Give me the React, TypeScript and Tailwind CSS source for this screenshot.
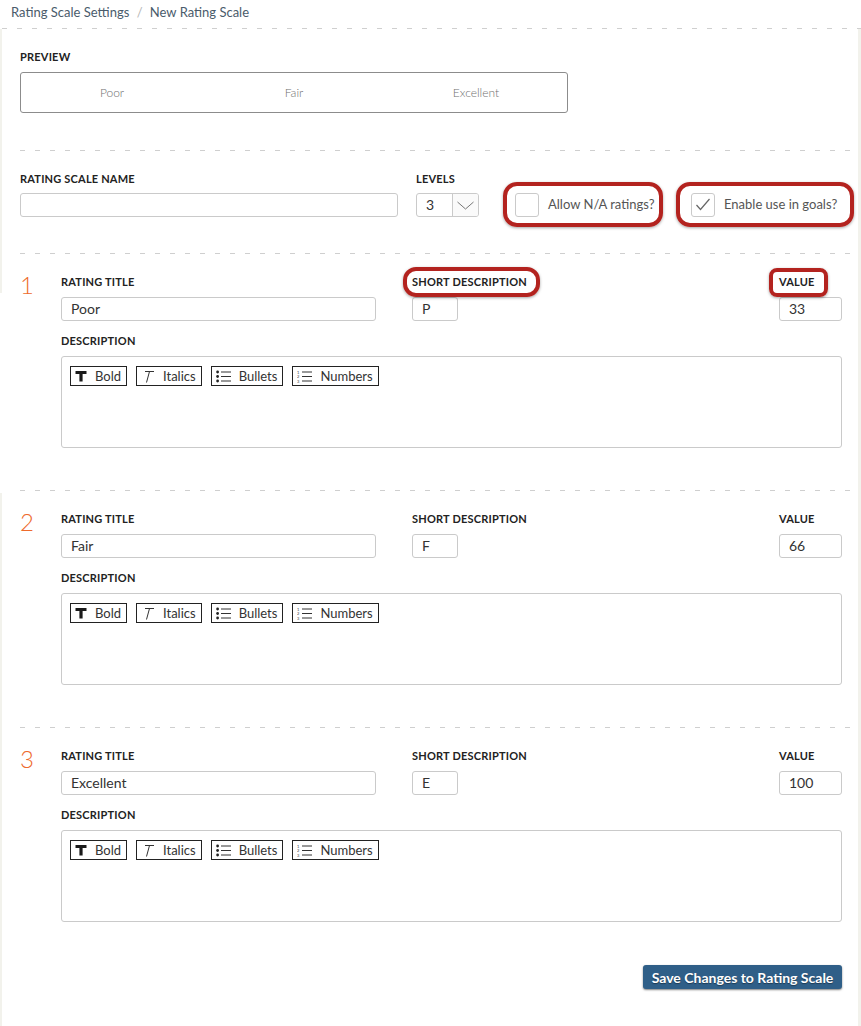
const levels = [
  { n: "1", title: "Poor", short: "P", value: "33", marked: true },
  { n: "2", title: "Fair", short: "F", value: "66", marked: false },
  { n: "3", title: "Excellent", short: "E", value: "100", marked: false },
];

function Dash({ className = "" }: { className?: string }) {
  return (
    <div
      className={`h-px bg-[linear-gradient(to_right,#cfcfcf_5px,transparent_5px)] bg-[length:15px_1px] ${className}`}
    />
  );
}

function Label({ children, mark }: { children: React.ReactNode; mark?: string }) {
  return (
    <div className="relative text-[11px] font-bold leading-[14px] tracking-[0.2px] text-[#222] whitespace-nowrap">
      {children}
      {mark === "short" && (
        <span className="absolute -left-[9px] -right-[13px] -top-[8px] -bottom-[8px] rounded-[13px] border-4 border-[#b3231f] shadow-[0_1px_3px_rgba(0,0,0,0.35)]" />
      )}
      {mark === "value" && (
        <span className="absolute -left-[10px] right-[14px] -top-[7px] -bottom-[8px] rounded-[8px] border-4 border-[#b3231f] shadow-[0_1px_3px_rgba(0,0,0,0.35)]" />
      )}
    </div>
  );
}

function Field({ value = "", className = "" }: { value?: string; className?: string }) {
  return (
    <div
      className={`h-[24px] rounded-[3px] border border-[#cacaca] bg-white px-[9px] text-[14px] leading-[22px] text-[#333] ${className}`}
    >
      {value}
    </div>
  );
}

function ToolButton({ icon, label }: { icon: React.ReactNode; label: string }) {
  return (
    <div className="flex h-[20px] items-center gap-[8px] border border-[#222] pl-[4px] pr-[5px] text-[13px] leading-[18px] text-[#333]">
      {icon}
      <span>{label}</span>
    </div>
  );
}

function Toolbar() {
  return (
    <div className="flex gap-[9px]">
      <ToolButton
        label="Bold"
        icon={
          <svg width="12" height="12" viewBox="0 0 12 12">
            <path d="M0.5 1h11v3H7.6v7.5H4.4V4H0.5z" fill="#1a1a1a" />
          </svg>
        }
      />
      <ToolButton
        label="Italics"
        icon={
          <svg width="14" height="13" viewBox="0 0 14 13" fill="none" stroke="#333" strokeWidth="1">
            <path d="M4 1.5h9M8.5 1.5 5.5 12.5" />
          </svg>
        }
      />
      <ToolButton
        label="Bullets"
        icon={
          <svg width="15" height="13" viewBox="0 0 15 13">
            <circle cx="1.6" cy="2" r="1.4" fill="#222" />
            <circle cx="1.6" cy="6.5" r="1.4" fill="#222" />
            <circle cx="1.6" cy="11" r="1.4" fill="#222" />
            <path d="M5 2h10M5 6.5h10M5 11h10" stroke="#333" strokeWidth="1" />
          </svg>
        }
      />
      <ToolButton
        label="Numbers"
        icon={
          <svg width="15" height="13" viewBox="0 0 15 13">
            <text x="0" y="3.5" fontSize="4" fill="#333">1</text>
            <text x="0" y="8" fontSize="4" fill="#333">2</text>
            <text x="0" y="12.5" fontSize="4" fill="#333">3</text>
            <path d="M5 2h10M5 6.5h10M5 11h10" stroke="#333" strokeWidth="1" />
          </svg>
        }
      />
    </div>
  );
}

function Checkbox({ checked }: { checked?: boolean }) {
  return (
    <div className="flex h-[24px] w-[24px] shrink-0 items-center justify-center rounded-[3px] border border-[#cacaca] bg-white">
      {checked && (
        <svg width="16" height="13" viewBox="0 0 16 13" fill="none" stroke="#666" strokeWidth="1.2">
          <path d="M1.5 7 5.5 11.5 14.5 1" />
        </svg>
      )}
    </div>
  );
}

export default function App() {
  return (
    <div className="min-h-screen bg-white font-['Lato',sans-serif] text-[#333]">
      <div className="h-[28px] pl-[11px] pt-[3px] text-[13px] leading-[18px] text-[#4a5b6b]">
        Rating Scale Settings <span className="mx-[4px] text-[#b5b5b5]">/</span> New Rating Scale
      </div>
      <Dash className="ml-[2px]" />
      <div className="flex">
        <div className="flex w-[2px] flex-col">
          <div className="h-[264px] bg-[#f2f2ec]" />
          <div className="h-[200px]" />
          <div className="flex-1 bg-[#f2f2ec]" />
        </div>
        <main className="flex-1 pl-[18px]">
          <div className="pt-[21px]">
            <Label>PREVIEW</Label>
            <div className="mt-[8px] grid h-[41px] w-[548px] grid-cols-3 items-center rounded-[3px] border border-[#8c8c8c] text-center text-[12px] font-light text-[#707070]">
              <span>Poor</span>
              <span>Fair</span>
              <span>Excellent</span>
            </div>
          </div>
          <Dash className="mt-[37px]" />

          <div className="flex items-start pt-[21px]">
            <div className="w-[378px]">
              <Label>RATING SCALE NAME</Label>
              <Field className="mt-[7px]" />
            </div>
            <div className="ml-[18px]">
              <Label>LEVELS</Label>
              <div className="mt-[7px] flex h-[24px] w-[63px] overflow-hidden rounded-[3px] border border-[#cacaca]">
                <div className="w-[36px] border-r border-[#cacaca] pl-[9px] text-[14px] leading-[22px] text-[#333]">3</div>
                <div className="flex flex-1 items-center justify-center bg-[#fafafa]">
                  <svg width="17" height="9" viewBox="0 0 17 9" fill="none" stroke="#777" strokeWidth="1">
                    <path d="M0.5 1 8.5 8 16.5 1" />
                  </svg>
                </div>
              </div>
            </div>
            <div className="ml-[24px] mt-[10px] flex h-[45px] w-[160px] items-center gap-[9px] rounded-[14px] border-4 border-[#b3231f] pl-[8px] shadow-[0_1px_3px_rgba(0,0,0,0.35)]">
              <Checkbox />
              <span className="text-[13px] text-[#555] whitespace-nowrap">Allow N/A ratings?</span>
            </div>
            <div className="ml-[13px] mt-[10px] flex h-[45px] w-[178px] items-center gap-[9px] rounded-[14px] border-4 border-[#b3231f] pl-[11px] shadow-[0_1px_3px_rgba(0,0,0,0.35)]">
              <Checkbox checked />
              <span className="text-[13px] text-[#555] whitespace-nowrap">Enable use in goals?</span>
            </div>
          </div>
          <Dash className="mt-[26px]" />

          {levels.map((l, i) => (
            <div key={l.n}>
              <div className={`flex pt-[21px] ${i < levels.length - 1 ? "pb-[42px]" : ""}`}>
                <div className="-mt-[2px] w-[41px] text-[24px] font-light leading-[24px] text-[#ee6a2c]">{l.n}</div>
                <div className="w-[781px]">
                  <div className="flex items-start">
                    <div className="w-[315px]">
                      <Label>RATING TITLE</Label>
                      <Field className="mt-[8px]" value={l.title} />
                    </div>
                    <div className="ml-[36px]">
                      <Label mark={l.marked ? "short" : undefined}>SHORT DESCRIPTION</Label>
                      <Field className="mt-[8px] w-[46px]" value={l.short} />
                    </div>
                    <div className="ml-auto w-[63px]">
                      <Label mark={l.marked ? "value" : undefined}>VALUE</Label>
                      <Field className="mt-[8px]" value={l.value} />
                    </div>
                  </div>
                  <div className="mt-[13px]">
                    <Label>DESCRIPTION</Label>
                  </div>
                  <div className="mt-[8px] h-[92px] rounded-[3px] border border-[#cacaca] pl-[8px] pt-[9px]">
                    <Toolbar />
                  </div>
                </div>
              </div>
              {i < levels.length - 1 && <Dash />}
            </div>
          ))}

          <div className="flex w-[822px] justify-end pb-[37px] pt-[43px]">
            <button className="h-[24px] w-[199px] rounded-[3px] bg-[#2f5f88] text-[14px] font-bold text-white shadow-[0_1px_2px_rgba(0,0,0,0.5)] [text-shadow:0_1px_1px_rgba(0,0,0,0.4)]">
              Save Changes to Rating Scale
            </button>
          </div>
        </main>
        <div className="w-[3px] bg-[#f2f2ec]" />
      </div>
    </div>
  );
}
